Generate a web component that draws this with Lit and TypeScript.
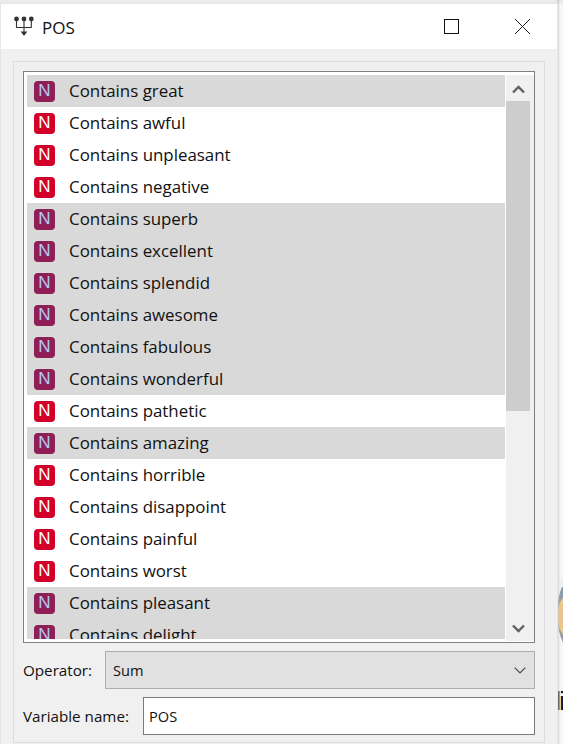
import { LitElement, html, css } from "lit";
import { customElement } from "lit/decorators.js";

const rows: [string, boolean][] = [
  ["great", true], ["awful", false], ["unpleasant", false], ["negative", false],
  ["superb", true], ["excellent", true], ["splendid", true], ["awesome", true],
  ["fabulous", true], ["wonderful", true], ["pathetic", false], ["amazing", true],
  ["horrible", false], ["disappoint", false], ["painful", false], ["worst", false],
  ["pleasant", true], ["delight", true],
];

@customElement("app-root")
export class AppRoot extends LitElement {
  static styles = css`
    :host { display: block; width: 563px; height: 744px; overflow: hidden; position: relative; background: #f6f6f6;
      font-family: "Open Sans", "Noto Sans", sans-serif; color: #111; }
    .desk { position: absolute; }
    .top { left: 0; top: 0; width: 563px; height: 4px; background: #ebebeb; }
    .shadow { left: 557px; top: 0; width: 3px; height: 744px; background: linear-gradient(90deg, #c4c4c4, rgba(220,220,220,0)); }
    .ring { left: 557px; top: 567px; width: 54px; height: 93px; border-radius: 50%; background: #8d9ca8; }
    .disc { left: 557px; top: 586px; width: 54px; height: 60px; border-radius: 50%; background: #ecc48e; }
    .gap1 { left: 557px; top: 578px; width: 8px; height: 9px; background: #f1f1f1; }
    .gap2 { left: 557px; top: 645px; width: 8px; height: 2px; background: #f1f1f1; }
    .li { left: 555.5px; top: 687px; font-family: "Liberation Sans", sans-serif; font-size: 25px; line-height: 28px;
      letter-spacing: -1.8px; color: #111; }
    .f1 { left: 0; top: 357px; width: 1px; height: 4px; background: #8fa3b5; }
    .f2 { left: 0; top: 565px; width: 1px; height: 20px; background: linear-gradient(#9aaab8 85%, #7a1f1f); }
    .f3 { left: 0; top: 622px; width: 1px; height: 15px; background: #9aaab8; }

    .window { position: absolute; left: 1px; top: 4px; width: 556px; height: 745px; background: #f0f0f0;
      display: flex; flex-direction: column; box-shadow: 0 0 0 1px #e6e6e6; }
    .title { height: 45px; flex: none; background: #fff; display: flex; align-items: center; padding-left: 13px; }
    .title .appicon { width: 22px; height: 24px; margin: 0 6px 2px 0; flex: none; }
    .title .name { font-size: 17px; flex: 1; color: #111; margin-top: 1px; }
    .ctl { width: 15px; height: 15px; flex: none; display: block; }
    .max { margin-right: 56px; }
    .close { margin-right: 27px; }

    .frame { margin: 12px 12px 0 12px; height: 682px; border: 1px solid #dcdcdc; box-sizing: border-box;
      padding: 9px 9px 0 9px; display: flex; flex-direction: column; }
    .list { width: 512px; height: 572px; box-sizing: border-box; border: 1px solid #7f7f8a; box-shadow: inset 0 0 0 1px #fff;
      background: #fff; padding: 3px 2px 3px 3px; display: flex; flex: none; }
    .rows { width: 478px; overflow: hidden; flex: none; }
    .row { height: 32px; display: flex; align-items: center; padding-left: 7px; font-size: 16.9px; }
    .row .txt { margin-bottom: 2px; }
    .row.sel { background: #d9d9d9; }
    .badge { width: 21px; height: 21px; border-radius: 4px; flex: none; margin-right: 14px; background: #d3002a; color: #fff;
      display: flex; align-items: center; justify-content: center; font-size: 17px;
      font-family: "Liberation Sans", sans-serif; }
    .row.sel .badge { background: #8e1f57; color: #b4c8f4; }
    .bar { width: 28px; margin-left: 1px; flex: none; background: #f0f0f0; display: flex; flex-direction: column; margin-bottom: -2px; }
    .arrow { height: 26px; flex: none; display: flex; align-items: center; justify-content: center; padding-right: 4px; }
    .arrow.up { padding-top: 3px; box-sizing: border-box; }
    .thumb { width: 24px; height: 310px; background: #cdcdcd; flex: none; }
    .spacer { flex: 1; }

    .field { display: flex; align-items: center; font-size: 15.2px; height: 38px; margin-top: 8px; }
    .field label { width: 82px; flex: none; }
    .var label { width: 120px; }
    .select { width: 430px; height: 38px; box-sizing: border-box; background: #e1e1e1; border: 1px solid #adadad;
      display: flex; align-items: center; justify-content: space-between; padding: 0 8px 0 7px; font-size: 14.6px; }
    .input { width: 392px; height: 38px; box-sizing: border-box; background: #fff; border: 1px solid #7a7a7a;
      display: flex; align-items: center; padding-left: 5px; font-size: 14.6px; }
  `;

  render() {
    return html`
      <div class="desk top"></div>
      <div class="desk f1"></div>
      <div class="desk f2"></div>
      <div class="desk f3"></div>
      <div class="desk ring"></div>
      <div class="desk gap1"></div>
      <div class="desk disc"></div>
      <div class="desk gap2"></div>
      <div class="desk li">li</div>
      <div class="desk shadow"></div>
      <div class="window">
        <div class="title">
          <svg class="appicon" viewBox="0 0 22 24">
            <circle cx="2.5" cy="5" r="2.4" fill="#333"/>
            <circle cx="10" cy="5" r="2.4" fill="#333"/>
            <circle cx="17.3" cy="5" r="2.4" fill="#333"/>
            <path d="M2.5 5V13.5H17.3V5M10 5V18" fill="none" stroke="#333" stroke-width="1.1"/>
            <path d="M6.6 17.5H13.4L10 22Z" fill="#333"/>
          </svg>
          <span class="name">POS</span>
          <svg class="ctl max" viewBox="0 0 15 15"><rect x=".5" y=".5" width="14" height="14" fill="none" stroke="#111"/></svg>
          <svg class="ctl close" viewBox="0 0 15 15"><path d="M0 0L15 15M15 0L0 15" fill="none" stroke="#222" stroke-width="1"/></svg>
        </div>
        <div class="frame">
          <div class="list">
            <div class="rows">
              ${rows.map(([w, s]) => html`
                <div class="row ${s ? "sel" : ""}"><span class="badge">N</span><span class="txt">Contains ${w}</span></div>`)}
            </div>
            <div class="bar">
              <div class="arrow up"><svg width="13" height="9" viewBox="0 0 13 9"><path d="M1 7.5L6.5 2L12 7.5" fill="none" stroke="#606060" stroke-width="2.4"/></svg></div>
              <div class="thumb"></div>
              <div class="spacer"></div>
              <div class="arrow"><svg width="13" height="9" viewBox="0 0 13 9"><path d="M1 1.5L6.5 7L12 1.5" fill="none" stroke="#606060" stroke-width="2.4"/></svg></div>
            </div>
          </div>
          <div class="field">
            <label>Operator:</label>
            <div class="select"><span>Sum</span>
              <svg width="12" height="7" viewBox="0 0 12 7"><path d="M.7 .7L6 6L11.3 .7" fill="none" stroke="#444" stroke-width="1.1"/></svg>
            </div>
          </div>
          <div class="field var">
            <label>Variable name:</label>
            <div class="input">POS</div>
          </div>
        </div>
      </div>
    `;
  }
}
